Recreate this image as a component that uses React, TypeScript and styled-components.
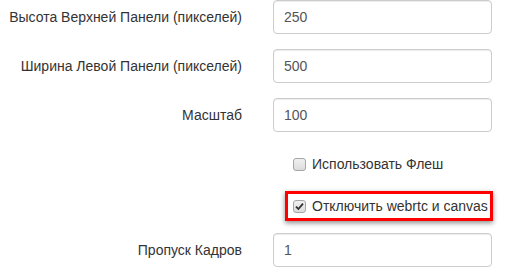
import styled, { createGlobalStyle } from "styled-components";

const GlobalStyle = createGlobalStyle`
  body {
    margin: 0;
    background: #fff;
    font-family: "Liberation Sans", Arial, Helvetica, sans-serif;
    font-size: 14px;
    line-height: 20px;
    color: #333;
  }
`;

const Form = styled.form`
  display: flex;
  flex-direction: column;
  padding-left: 8px;
`;

const Group = styled.div<{ $check?: boolean }>`
  display: grid;
  grid-template-columns: 234px 219px;
  column-gap: 31px;
  height: ${(p) => (p.$check ? "27px" : "34px")};
  margin-bottom: ${(p) => (p.$check ? "16px" : "15px")};
`;

const Label = styled.label`
  text-align: right;
  padding-top: 7px;
  white-space: nowrap;
`;

const Input = styled.input`
  box-sizing: border-box;
  height: 34px;
  width: 100%;
  padding: 6px 10px;
  font: inherit;
  color: #555;
  background: #fff;
  border: 1px solid #ccc;
  border-radius: 4px;
  box-shadow: inset 0 1px 1px rgba(0, 0, 0, 0.075);
  outline: none;
`;

const CheckLabel = styled.label<{ $marked?: boolean }>`
  grid-column: 2;
  display: flex;
  align-items: center;
  align-self: start;
  box-sizing: border-box;
  white-space: nowrap;
  width: max-content;
  margin-left: ${(p) => (p.$marked ? "12px" : "20px")};
  margin-top: ${(p) => (p.$marked ? "1px" : "7px")};
  height: ${(p) => (p.$marked ? "30px" : "20px")};
  padding: ${(p) => (p.$marked ? "0 2px 0 5px" : "0")};
  border: ${(p) => (p.$marked ? "3px solid #f00" : "none")};
  box-shadow: ${(p) => (p.$marked ? "0 2px 5px rgba(0, 0, 0, 0.45)" : "none")};
`;

const Box = styled.span`
  box-sizing: border-box;
  width: 13px;
  height: 13px;
  margin-right: 6px;
  border: 1px solid #a6a6a6;
  border-radius: 3px;
  background: linear-gradient(#f0f0f0, #dcdcdc);
  display: flex;
  align-items: center;
  justify-content: center;
`;

function Check({ checked, children, marked }: { checked?: boolean; children: string; marked?: boolean }) {
  return (
    <CheckLabel $marked={marked}>
      <Box>
        {checked && (
          <svg width="9" height="9" viewBox="0 0 9 9">
            <path d="M1 4.6 L3.4 7 L8 1.6" fill="none" stroke="#333" strokeWidth="1.8" />
          </svg>
        )}
      </Box>
      {children}
    </CheckLabel>
  );
}

export default function App() {
  return (
    <>
      <GlobalStyle />
      <Form>
        <Group>
          <Label>Высота Верхней Панели (пикселей)</Label>
          <Input defaultValue="250" />
        </Group>
        <Group>
          <Label>Ширина Левой Панели (пикселей)</Label>
          <Input defaultValue="500" />
        </Group>
        <Group>
          <Label>Масштаб</Label>
          <Input defaultValue="100" />
        </Group>
        <Group $check>
          <Check>Использовать Флеш</Check>
        </Group>
        <Group $check>
          <Check checked marked>
            Отключить webrtc и canvas
          </Check>
        </Group>
        <Group>
          <Label>Пропуск Кадров</Label>
          <Input defaultValue="1" />
        </Group>
      </Form>
    </>
  );
}
